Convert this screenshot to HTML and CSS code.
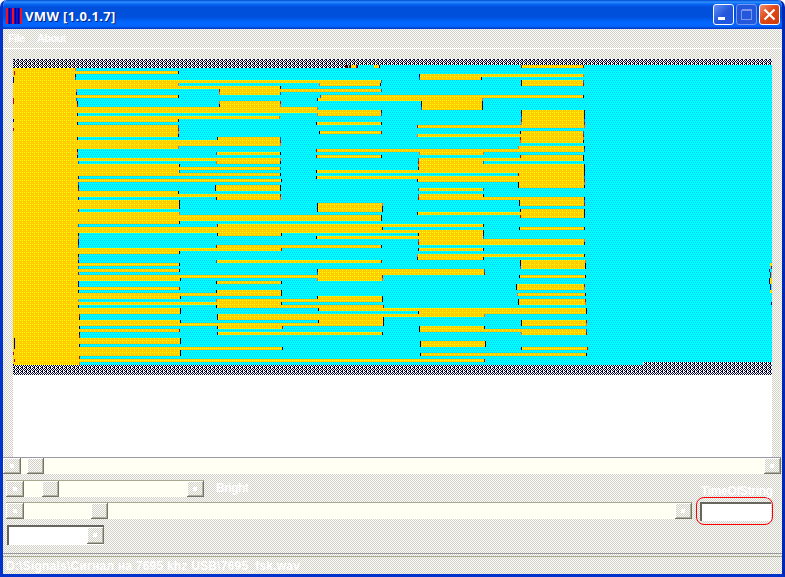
FILE: index.html
```html
<!DOCTYPE html>
<html lang="en">
<head>
<meta charset="utf-8">
<title>VMW [1.0.1.7]</title>
<link rel="stylesheet" href="styles.css">
</head>
<body>
<div class="window">
  <header class="titlebar">
    <svg class="app-icon" width="16" height="16" shape-rendering="crispEdges"><path fill="#1010d0" d="M0 0h16v16H0z"/><path fill="#f01020" d="M0 0h2v16H0zM6 0h2v16H6zM14 0h2v16h-2z"/><path fill="#000080" d="M3 0h1v16H3zM9 0h1v16H9zM12 0h1v16h-1z"/></svg>
    <h1 class="title">VMW [1.0.1.7]</h1>
    <div class="buttons">
      <span class="button"><svg width="19" height="19"><path fill="#fff" d="M4 12h7v3H4z"/></svg></span>
      <span class="button disabled"><svg width="19" height="19" shape-rendering="crispEdges"><path fill="none" stroke="#7c94ec" d="M4.500 5.500h10v9h-10zM4.500 4.500h10"/></svg></span>
      <span class="button close"><svg width="19" height="19"><path stroke="#fff" stroke-width="2.200" d="M4.500 4.500l10 10M14.500 4.500l-10 10"/></svg></span>
    </div>
  </header>
  <nav class="menu"><span class="menu-file">File</span><span>About</span></nav>
  <main class="client">
    <div class="view">
      <svg id="plot" width="759" height="316" viewBox="13 59 759 316" shape-rendering="crispEdges">
        <defs>
          <pattern id="cyan" width="4" height="4" patternUnits="userSpaceOnUse"><path fill="#00ffff" d="M0 0h4v4H0z"/><path fill="#00ccff" d="M0 0h1v1H0zM2 0h1v1H2zM1 2h1v1H1zM3 2h1v1H3z"/></pattern>
          <pattern id="yellow" width="4" height="4" patternUnits="userSpaceOnUse"><path fill="#ffcc00" d="M0 0h4v4H0z"/><path fill="#ffff00" d="M0 0h1v1H0zM2 2h1v1H2zM2 0h1v1H2z"/></pattern>
          <pattern id="hatch" width="4" height="4" patternUnits="userSpaceOnUse"><path fill="#fff" d="M0 0h4v4H0z"/><path fill="#000033" d="M0 0h1v1H0zM2 0h1v1H2zM1 1h1v1H1zM3 1h1v1H3zM0 2h1v1H0zM2 2h1v1H2zM1 3h1v1H1zM2 3h1v1H2z"/></pattern>
        </defs>
        <path fill="url(#cyan)" d="M13 59h759v316H13z"/>
        <path fill="url(#hatch)" d="M13 59h759v6H345v3H13zM13 365h630v-3h129v13H13z"/>
        <path fill="url(#yellow)" d="M13 68h62v12h1v20h1v60h1v150h1v55H13zM13 65h62v3H13z"/>
        <path fill="url(#cyan)" d="M76 65h269v3H76z"/>
        <path fill="url(#hatch)" d="M13 65h332v3H13z"/>
        <g id="bars"></g>
        <path fill="#330000" d="M345 65h3v3h-3zM350 65h1v3h-1z"/><path fill="#c00" d="M349 65h1v3h-1zM356 65h1v3h-1zM14 71h1v4h-1zM13 98h1v6h-1zM13 128h1v3h-1zM13 352h1v3h-1zM14 359h1v3h-1zM770 272h1v6h-1zM771 266h1v3h-1z"/>
        <path fill="url(#yellow)" d="M351 65h5v3h-5zM374 65h5v3h-5zM770 278h2v6h-2zM770 263h2v3h-2zM770 290h2v3h-2z"/>
        <path fill="#000080" d="M357 65h1v3h-1zM379 65h1v3h-1zM13 77h1v6h-1zM13 119h1v3h-1zM13 364h1v1h-1zM14 338h1v11h-1zM769 269h1v3h-1zM769 278h1v6h-1zM770 284h1v6h-1zM771 302h1v3h-1z"/>
      </svg>
    </div>
    <div class="scroll horizontal"><i class="thumb dot"></i><i class="thumb position"></i><i class="thumb last dot"></i></div>
    <div class="controls">
      <div class="bright"><div class="scroll bright-scroll"><i class="thumb dot"></i><i class="thumb position"></i><i class="thumb last dot"></i></div><span class="bright-label">Bright</span></div>
      <div class="scroll time-scroll"><i class="thumb dot"></i><i class="thumb position"></i><i class="thumb last dot"></i></div>
      <div class="combo"><i class="thumb last dot"></i></div>
      <div class="time"><label class="time-label" for="time">TimeOfString</label><div class="ring"><input id="time" class="time-input"></div></div>
    </div>
  </main>
  <footer class="status"><span>D:\Signals\Сигнал на 7695 khz USB\7695_fsk.wav</span></footer>
</div>
<script src="plot.js"></script>
</body>
</html>
```
FILE: styles.css
```css
* { box-sizing: border-box; }
body { margin: 0; background: #fff; font-family: "Liberation Sans", sans-serif; font-size: 11px; color: #fff; overflow: hidden; }
.window {
  width: 785px; height: 577px; display: flex; flex-direction: column;
  border: solid #0033cc; border-width: 0 3px 3px;
  border-right-color: #0028b4; border-radius: 7px 7px 0 0; overflow: hidden;
  background: #e7e6e1 repeating-conic-gradient(#d2d0cb 0 25%, #fdfdf8 0 50%) 0 0 / 2px 2px;
}
.titlebar {
  height: 29px; flex: none; margin: 0 -3px; padding: 3px 5px 0 6px; display: flex; align-items: center;
  background: linear-gradient(#0048d0 0, #3090ff 2px, #0868f4 4px, #0050dc 7px, #0050dc 17px, #0066ff 22px, #0066ff 26px, #0038c4 29px);
}
.title { margin: -1px 0 0 3px; font: bold 13px/20px "Open Sans", sans-serif; letter-spacing: 0.350px; text-shadow: 1px 1px #002080; white-space: nowrap; }
.buttons { margin: -3px 0 0 auto; display: flex; gap: 2px; }
.button { width: 21px; height: 21px; border: 1px solid #fff; border-radius: 3px; background: linear-gradient(135deg, #6690f4, #2358dc 50%, #1c54e4); }
.button svg { display: block; }
.app-icon { margin-top: -1px; }
.disabled { border-color: #7898f0; background: #2458dc; }
.close { background: linear-gradient(135deg, #f09070, #e04818 45%, #d03c08); }
.menu { height: 20px; flex: none; border-bottom: 1px solid #fff; padding: 2px 5px; display: flex; font: bold 11px/14px "Liberation Sans", sans-serif; letter-spacing: -0.600px; }
.menu-file { width: 29px; }
.client { flex: 1; min-height: 0; display: flex; flex-direction: column; }
.view { height: 398px; flex: none; margin: 10px 10px 0; width: 759px; background: #fff; }
.view svg { display: block; }
.scroll { position: relative; display: flex; height: 17px; background: #fffff4; border-top: 1px solid #a8a990; }
.horizontal { width: 778px; flex: none; border-top-color: #9999a8; }
.thumb {
  width: 17px; height: 16px; flex: none; display: grid; place-items: center;
  border: solid #747568; border-width: 0 1px 1px 0; box-shadow: inset 1px 1px #fff, inset -1px -1px #b0afa0;
  background: repeating-conic-gradient(#d0cfc8 0 25%, #fcfcf6 0 50%) 0 0 / 2px 2px;
}
.horizontal .thumb:first-child { width: 18px; }
.dot::after { content: ""; width: 4px; height: 4px; background: #fff; }
.last { margin-left: auto; }
.horizontal .position { margin-left: 6px; }
.bright-scroll .position { margin-left: 18px; }
.bright-scroll .thumb:first-child, .time-scroll .thumb:first-child { width: 18px; }
.time-scroll .position { margin-left: 67px; }
.controls { display: grid; grid-template: 22px 23px 29px / 686px 1fr; padding: 6px 0 0 3px; height: 79px; flex: none; }
.bright { display: flex; grid-column: 1; }
.bright-scroll { width: 198px; }
.bright-label { margin-left: 12px; font: bold 12px/17px "Liberation Sans", sans-serif; letter-spacing: -0.500px; }
.time-scroll { grid-area: 2 / 1; width: 686px; }
.combo { grid-area: 3 / 1; width: 97px; height: 20px; margin-left: 1px; display: flex; background: #fff; border: 2px solid #66665e; border-width: 2px 0 0 2px; }
.combo .thumb { height: 17px; }
.time { grid-area: 1 / 2 / 4 / 3; margin: 4px 0 0 4px; width: 77px; }
.time-label { display: block; height: 13px; padding-left: 5px; font: bold 12px/15px "Liberation Sans", sans-serif; letter-spacing: -0.350px; white-space: nowrap; }
.ring { width: 77px; height: 28px; border: 1px solid #f00; border-radius: 8px; padding: 4px 2px 0 3px; }
.time-input { display: block; width: 71px; height: 19px; padding: 0; background: #fff; border: 2px solid #66665e; border-width: 2px 0 0 2px; outline: 0; }
.status { height: 21px; flex: none; border-top: 1px solid #9999a0; padding-top: 2px; font: bold 12px/18px "Liberation Sans", sans-serif; letter-spacing: 0.220px; white-space: pre; }
.status span { display: block; height: 18px; border-top: 1px solid #a8a990; padding-left: 3px; }
```
FILE: plot.js
```js
// Decoded signal segments: left, right, top, bottom.
const segments = `77 178 71 74;77 381 80 83;77 178 83 86;77 219 86 89;219 280 86 95;280 381 89 92;319 380 80 86
77 178 95 98;78 317 107 113;219 280 101 110;219 317 110 113;317 381 110 116;78 279 116 119;78 178 119 122;78 178 125 137
78 280 140 146;78 178 146 149;217 280 137 146;78 280 158 161;216 280 158 164;78 179 164 176;179 280 167 170;179 280 173 176
78 281 179 182;78 178 191 197;178 280 194 197;215 280 185 191;216 280 194 200;79 179 200 209;79 179 212 224;179 381 215 221
79 217 227 233;79 179 248 254;179 281 248 251;79 179 263 266;79 179 269 272;79 180 275 281;180 317 275 278;79 179 287 290
79 180 293 299;180 281 293 296;79 281 302 305;79 180 308 314;79 180 320 326;180 383 323 326;79 179 329 332;80 180 338 344
80 180 347 356;180 282 347 350;80 484 359 362;216 280 152 155;320 583 95 98;317 421 98 101;421 482 95 110;316 381 122 125
319 381 131 134;316 518 149 152;316 381 155 158;316 418 170 173;316 418 176 179;317 382 203 212;419 583 74 77;419 481 74 80
521 583 65 68;521 583 80 86;521 584 110 128;417 521 125 128;417 521 134 137;520 583 131 143;518 584 146 152;419 483 152 155
520 583 155 161;418 483 158 173;483 520 158 161;518 584 164 188;483 518 164 173;417 519 176 182;418 483 188 191;418 483 194 200
483 519 197 200;519 584 197 206;520 584 209 218;417 520 212 215;217 382 224 233;382 483 224 227;382 418 230 233;217 281 224 236
316 418 236 239;519 584 227 230;418 483 230 245;483 584 239 245;418 483 248 251;216 381 245 248;216 281 245 251;417 483 254 260
483 584 254 257;216 381 260 263;520 585 260 269;317 382 269 281;382 484 269 275;519 585 275 278;216 281 281 284;516 584 284 290
216 281 290 296;517 585 293 296;216 281 299 308;281 317 299 302;317 382 296 302;281 383 305 308;318 383 305 311;383 418 308 311
518 585 299 305;418 586 308 314;217 383 314 320;383 484 314 317;318 383 314 326;217 282 323 329;217 382 332 335;521 586 320 326
419 484 326 332;484 521 329 332;521 586 329 335;420 485 341 347;521 587 347 350;420 586 353 356`
  .split(/[;\n]/).map(s => s.trim().split(" ").map(Number));

// Segments that start at the leading block overlap its edge.
for (const s of segments) if (s[0] < 90) s[0] = 75;

const group = document.getElementById("bars");
const edgeColors = ["#330000", "#000066", "#cc0000", "#000099", "#000033", "#ff6633", "#0066ff"];

function rect(x, y, w, h, fill) {
  const r = document.createElementNS("http://www.w3.org/2000/svg", "rect");
  r.setAttribute("x", x); r.setAttribute("y", y);
  r.setAttribute("width", w); r.setAttribute("height", h);
  r.setAttribute("fill", fill);
  group.append(r);
}

for (const [l, r, t, b] of segments) rect(l, t, r - l, b - t, "url(#yellow)");

// Edge marks appear only where a segment borders the background.
const covered = (x, y) => segments.some(s => x >= s[0] && x < s[1] && y >= s[2] && y < s[3]);
segments.forEach(([l, r, t, b], i) => {
  for (let y = t; y < b; y += 3) {
    if (l > 90 && !covered(l - 1, y)) rect(l, y, 1, 3, edgeColors[(i + y) % 7]);
    if (!covered(r, y)) rect(r, y, 1, 3, edgeColors[(i * 3 + y) % 7]);
  }
});
// Boundary of the leading block.
for (let y = 68; y < 365; y += 3) {
  const x = y < 80 ? 75 : y < 100 ? 76 : y < 160 ? 77 : y < 310 ? 78 : 79;
  if (!covered(85, y)) rect(x, y, 1, 3, edgeColors[(y / 3 | 0) * 5 % 7]);
}
```
